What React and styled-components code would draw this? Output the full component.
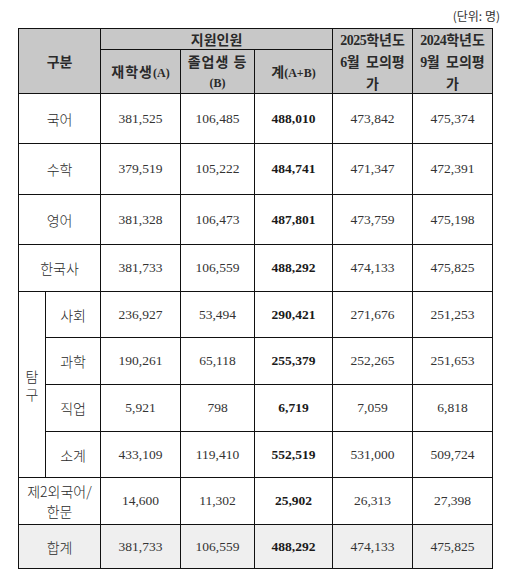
import React from 'react';
import styled, { createGlobalStyle } from 'styled-components';

const GlobalStyle = createGlobalStyle`
  html, body {
    margin: 0;
    padding: 0;
    background: #fff;
  }
  body {
    font-family: "Liberation Serif", "Noto Sans CJK KR", serif;
    color: #222;
  }
`;

const Page = styled.div`
  width: 509px;
  padding-top: 9px;
`;

const Unit = styled.div`
  display: flex;
  justify-content: flex-end;
  padding-right: 9px;
  height: 19px;
  font-family: "Noto Sans CJK KR", sans-serif;
  font-size: 12px;
  line-height: 14px;
  color: #333;
`;

const Table = styled.table`
  margin-left: 18px;
  width: 474px;
  table-layout: fixed;
  border-collapse: collapse;
  border: 1px solid #111;
`;

const Row = styled.tr`
  height: ${(p) => p.$h}px;
  background: ${(p) => (p.$total ? '#efefef' : '#fff')};
`;

const Head = styled.th`
  border: 1px solid #111;
  background: #c8c8c8;
  padding: 0 2px;
  font-family: "Noto Sans CJK KR", sans-serif;
  font-weight: 700;
  font-size: 14px;
  line-height: 20px;
  color: #2a2a2a;
  text-align: center;
  vertical-align: middle;
  letter-spacing: ${(p) => p.$spread || 0}px;
`;

const Small = styled.span`
  font-family: "Liberation Serif", serif;
  font-size: 12px;
  font-weight: 700;
  letter-spacing: 0;
`;

const Year = styled.span`
  font-family: "Liberation Serif", serif;
  font-size: 14px;
  letter-spacing: -0.5px;
`;

const Label = styled.td`
  border: 1px solid #111;
  padding: 0 2px;
  font-family: "Noto Sans CJK KR", sans-serif;
  font-weight: 300;
  font-size: 14px;
  line-height: ${(p) => p.$lh || 20}px;
  color: #2a2a2a;
  text-align: center;
  vertical-align: middle;
`;

const Num = styled.td`
  border: 1px solid #111;
  padding: 0 2px;
  font-family: "Liberation Serif", serif;
  font-size: 13.5px;
  font-weight: ${(p) => (p.$bold ? 700 : 400)};
  color: ${(p) => (p.$bold ? '#1a1a1a' : '#333')};
  text-align: center;
  vertical-align: middle;
`;

const main = [
  { name: '국어', h: 50, v: ['381,525', '106,485', '488,010', '473,842', '475,374'] },
  { name: '수학', h: 51, v: ['379,519', '105,222', '484,741', '471,347', '472,391'] },
  { name: '영어', h: 50, v: ['381,328', '106,473', '487,801', '473,759', '475,198'] },
  { name: '한국사', h: 47, v: ['381,733', '106,559', '488,292', '474,133', '475,825'] },
];

const tamgu = [
  { name: '사회', h: 46, v: ['236,927', '53,494', '290,421', '271,676', '251,253'] },
  { name: '과학', h: 47, v: ['190,261', '65,118', '255,379', '252,265', '251,653'] },
  { name: '직업', h: 47, v: ['5,921', '798', '6,719', '7,059', '6,818'] },
  { name: '소계', h: 46, v: ['433,109', '119,410', '552,519', '531,000', '509,724'] },
];

const Values = ({ v }) =>
  v.map((n, i) => (
    <Num key={i} $bold={i === 2}>
      {n}
    </Num>
  ));

export default function App() {
  return (
    <Page>
      <GlobalStyle />
      <Unit>(단위: 명)</Unit>
      <Table>
        <colgroup>
          <col style={{ width: 27 }} />
          <col style={{ width: 55 }} />
          <col style={{ width: 80 }} />
          <col style={{ width: 74 }} />
          <col style={{ width: 78 }} />
          <col style={{ width: 80 }} />
          <col style={{ width: 80 }} />
        </colgroup>
        <thead>
          <Row $h={21}>
            <Head colSpan={2} rowSpan={2}>구분</Head>
            <Head colSpan={3}>지원인원</Head>
            <Head rowSpan={2}>
              <Year>2025</Year>학년도<br />
              <Year>6</Year>월&nbsp; 모의평<br />가
            </Head>
            <Head rowSpan={2}>
              <Year>2024</Year>학년도<br />
              <Year>9</Year>월&nbsp; 모의평<br />가
            </Head>
          </Row>
          <Row $h={43}>
            <Head $spread={1}>재학생<Small>(A)</Small></Head>
            <Head $spread={1}>
              졸업생 등<br />
              <Small>(B)</Small>
            </Head>
            <Head>계<Small>(A+B)</Small></Head>
          </Row>
        </thead>
        <tbody>
          {main.map((r) => (
            <Row key={r.name} $h={r.h}>
              <Label colSpan={2}>{r.name}</Label>
              <Values v={r.v} />
            </Row>
          ))}
          {tamgu.map((r, i) => (
            <Row key={r.name} $h={r.h}>
              {i === 0 && (
                <Label rowSpan={4} $lh={18}>
                  탐<br />구
                </Label>
              )}
              <Label>{r.name}</Label>
              <Values v={r.v} />
            </Row>
          ))}
          <Row $h={47}>
            <Label colSpan={2}>
              제2외국어/<br />한문
            </Label>
            <Values v={['14,600', '11,302', '25,902', '26,313', '27,398']} />
          </Row>
          <Row $h={44} $total>
            <Label colSpan={2}>합계</Label>
            <Values v={['381,733', '106,559', '488,292', '474,133', '475,825']} />
          </Row>
        </tbody>
      </Table>
    </Page>
  );
}
